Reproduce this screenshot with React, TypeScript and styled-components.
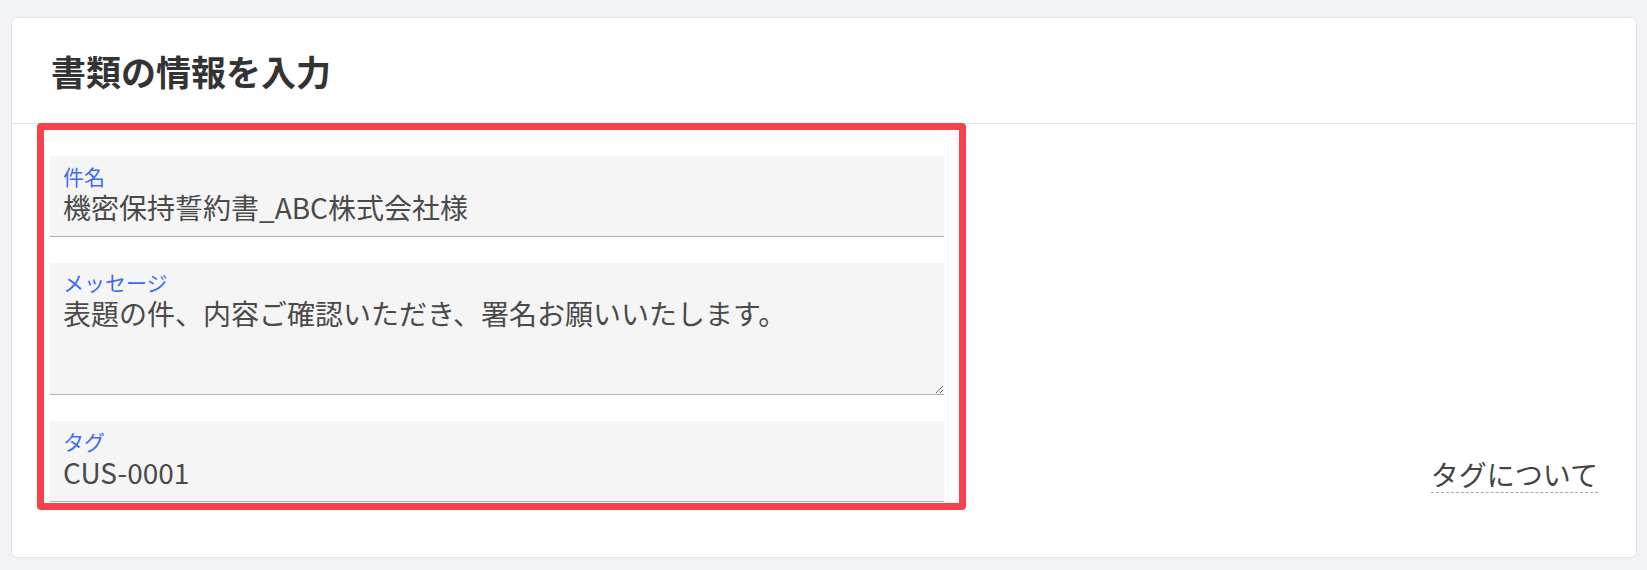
import styled, {createGlobalStyle} from "styled-components";

const GlobalStyle = createGlobalStyle`
    html, body {
        margin: 0;
        padding: 0;
        background: #f2f3f7;
    }
    body {
        font-family: "Noto Sans CJK JP", "Noto Sans", sans-serif;
        color: #4a4a4a;
    }
`

const StyledPage = styled.main`
    padding: 17px 10px 12px 11px;
`

const StyledCard = styled.section`
    background: #ffffff;
    border: 1px solid #dfe3ea;
    border-radius: 6px;
`

/*Card header with the page title and a divider under it*/
const StyledHeader = styled.header`
    height: 105px;
    display: flex;
    align-items: center;
    padding: 0 39px;
    border-bottom: 1px solid #dfe3ea;
`

const StyledTitle = styled.h2`
    margin: 0;
    font-size: 35px;
    font-weight: 700;
    line-height: 1.2;
    color: #333333;
`

const StyledBody = styled.div`
    display: flex;
    justify-content: space-between;
    align-items: flex-end;
    padding: 0 38px 47px 25px;
`

/*Red annotation frame around the form fields*/
const StyledHighlight = styled.div`
    margin-top: -1px;
    border: 7px solid #f5424b;
    border-radius: 4px;
    padding: 26px 15px 1px 6px;
    display: flex;
    flex-direction: column;
    gap: 26px;
`

const StyledField = styled.label<{ $top?: number }>`
    width: 894px;
    box-sizing: border-box;
    display: flex;
    flex-direction: column;
    background: #f5f5f5;
    border-bottom: 1px solid #a9b0c4;
    padding-top: ${(p) => p.$top ?? 8}px;
`

const StyledLabel = styled.span`
    padding-left: 13px;
    font-size: 21px;
    line-height: 25px;
    color: #3d6cf2;
`

const StyledInput = styled.input`
    border: none;
    outline: none;
    background: transparent;
    margin: 0 0 11px;
    padding: 0 13px;
    height: 36px;
    font: 28px/36px "Noto Sans CJK JP", "Noto Sans", sans-serif;
    color: #4a4a4a;
`

const StyledTextarea = styled.textarea`
    border: none;
    outline: none;
    background: transparent;
    margin: 0;
    padding: 0 0 0 13px;
    height: 99px;
    resize: vertical;
    font: 28px/36px "Noto Sans CJK JP", "Noto Sans", sans-serif;
    color: #4a4a4a;
`

const StyledLink = styled.a`
    margin-bottom: 17px;
    font-size: 28px;
    line-height: 36px;
    color: #444444;
    text-decoration: none;
    border-bottom: 1px dashed #a8a8a8;
    cursor: pointer;
`

export default function App() {
    return (
        <StyledPage>
            <GlobalStyle/>
            <StyledCard>
                <StyledHeader>
                    <StyledTitle>書類の情報を入力</StyledTitle>
                </StyledHeader>
                <StyledBody>
                    <StyledHighlight>
                        <StyledField>
                            <StyledLabel>件名</StyledLabel>
                            <StyledInput defaultValue="機密保持誓約書_ABC株式会社様"/>
                        </StyledField>
                        <StyledField $top={7}>
                            <StyledLabel>メッセージ</StyledLabel>
                            <StyledTextarea defaultValue="表題の件、内容ご確認いただき、署名お願いいたします。"/>
                        </StyledField>
                        <StyledField>
                            <StyledLabel>タグ</StyledLabel>
                            <StyledInput defaultValue="CUS-0001"/>
                        </StyledField>
                    </StyledHighlight>
                    <StyledLink>タグについて</StyledLink>
                </StyledBody>
            </StyledCard>
        </StyledPage>
    );
}
